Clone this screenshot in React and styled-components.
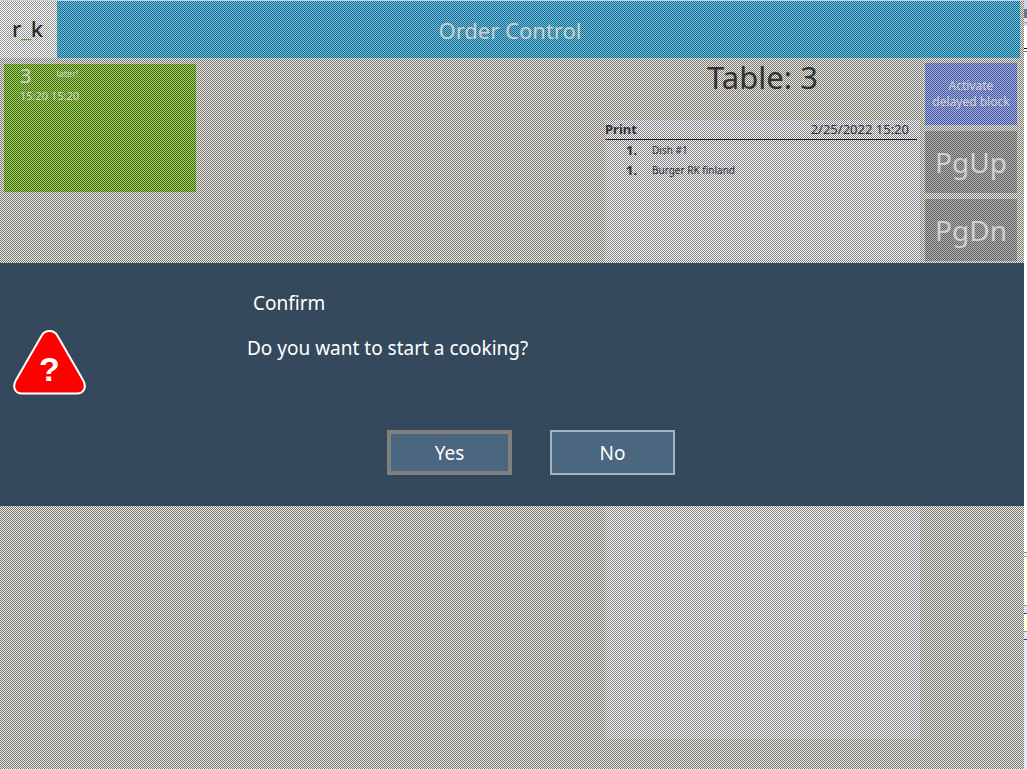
import React from "react";
import styled, { createGlobalStyle, css } from "styled-components";

const hex = (color) => color.replace("#", "%23");

const checkerTile = (light, dark) =>
  `url("data:image/svg+xml,%3Csvg xmlns='http://www.w3.org/2000/svg' width='32' height='32' shape-rendering='crispEdges'%3E%3Cdefs%3E%3Cpattern id='c' width='2' height='2' patternUnits='userSpaceOnUse'%3E%3Crect width='2' height='2' fill='${hex(light)}'/%3E%3Crect width='1' height='1' fill='${hex(dark)}'/%3E%3Crect x='1' y='1' width='1' height='1' fill='${hex(dark)}'/%3E%3C/pattern%3E%3C/defs%3E%3Crect width='32' height='32' fill='url(%23c)'/%3E%3C/svg%3E")`;

const dither = (light, dark) => css`
  background: ${checkerTile(light, dark)} 0 0 / 32px 32px fixed;
`;

const GlobalStyle = createGlobalStyle`
  *, *::before, *::after { box-sizing: border-box; }
  body { margin: 0; font-family: "Noto Sans", "Open Sans", sans-serif; color: #323235; }
  button { font-family: inherit; cursor: pointer; }
  h1, h2, h3, p, ol { margin: 0; padding: 0; font-weight: 400; }
`;

const Desktop = styled.div`
  display: flex;
  min-height: 100vh;
  background: #e8e8e8;
`;

const Stage = styled.div`
  position: relative;
  flex: 1;
  display: flex;
  flex-direction: column;
  border-top: 1px solid #c3d1e0;
  border-bottom: 1px solid #dcdcda;
  ${dither("#eae9e3", "#7a7872")}
`;

const Header = styled.header`
  display: flex;
  height: 57px;
  margin-right: 4px;
`;

const Logo = styled.div`
  width: 57px;
  display: flex;
  align-items: center;
  justify-content: center;
  padding: 0 2px 4px 0;
  font-size: 22px;
  line-height: 28px;
  font-weight: 500;
  color: #2b2b2b;
  ${dither("#ffffff", "#929292")}
`;

const Underscore = styled.span`
  color: #5f9a45;
`;

const Title = styled.h1`
  flex: 1;
  display: flex;
  align-items: center;
  justify-content: center;
  padding-right: 57px;
  font-size: 22px;
  line-height: 32px;
  color: #d0cccc;
  ${dither("#6cc0e0", "#1d6a8c")}
`;

const Body = styled.main`
  flex: 1;
  display: flex;
  padding-right: 7px;
`;

const Orders = styled.section`
  flex: 1;
  padding: 6px 4px;
`;

const OrderCard = styled.article`
  width: 192px;
  height: 128px;
  padding: 0 16px;
  color: #cfd3c6;
  ${dither("#a2cf62", "#436c14")}
`;

const CardTop = styled.div`
  display: flex;
  gap: 25px;
  line-height: 24px;
`;

const CardNumber = styled.h2`
  font-size: 20px;
`;

const CardNote = styled.span`
  font-size: 9px;
  line-height: 20px;
`;

const CardTimes = styled.p`
  font-size: 11px;
  line-height: 16px;
`;

const Detail = styled.section`
  width: 315px;
  display: flex;
  flex-direction: column;
  margin-bottom: 30px;
`;

const TableName = styled.h2`
  height: 62px;
  text-align: center;
  font-size: 31px;
  line-height: 38px;
`;

const Paper = styled.div`
  flex: 1;
  ${dither("#f8f8fa", "#828284")}
`;

const TicketHead = styled.div`
  display: flex;
  justify-content: space-between;
  height: 20px;
  margin-right: 3px;
  padding-right: 8px;
  border-bottom: 1px solid #1e1e1e;
  font-size: 13px;
  line-height: 18px;
`;

const Dishes = styled.ol`
  list-style: none;
`;

const Dish = styled.li`
  display: flex;
  line-height: 20px;
  font-size: 10px;
`;

const Quantity = styled.strong`
  width: 47px;
  padding-left: 21px;
  font-size: 13px;
`;

const Side = styled.nav`
  width: 97px;
  display: flex;
  flex-direction: column;
  gap: 6px;
  padding: 5px 0 0 5px;
`;

const SideButton = styled.button`
  height: 62px;
  padding: 0;
  border: 0;
  color: #cfcfcf;
  font-size: ${(p) => (p.$small ? "12px" : "28px")};
  line-height: ${(p) => (p.$small ? "16px" : "40px")};
  ${(p) => (p.$small ? dither("#a0b0e4", "#46569a") : dither("#b0b0b0", "#646464"))}
`;

const Overlay = styled.div`
  position: absolute;
  inset: 0;
  display: flex;
  align-items: center;
  padding-bottom: 1px;
`;

const Dialog = styled.section`
  width: 100%;
  display: flex;
  padding: 26px 0 31px;
  background: #34495c;
  color: #fff;
  font-size: 19px;
  line-height: 28px;
`;

const IconCell = styled.div`
  width: 247px;
  padding: 39px 12px 0;
`;

const DialogBody = styled.div`
  flex: 1;
`;

const DialogTitle = styled.h2`
  padding-left: 6px;
  font-size: 19px;
`;

const Message = styled.p`
  padding-top: 17px;
`;

const Actions = styled.div`
  display: flex;
  gap: 38px;
  padding: 68px 0 0 140px;
`;

const Choice = styled.button`
  width: 125px;
  height: 45px;
  padding: 0;
  border: ${(p) => (p.$focused ? "4px solid #80807f" : "2px solid #a3b5c3")};
  background: #4b677f;
  color: #fff;
  font-size: 19px;
  line-height: 28px;
`;

const Behind = styled.div`
  width: 3px;
  display: flex;
  flex-direction: column;
`;

const Sliver = styled.div`
  height: ${(p) => p.$height}px;
  flex: ${(p) => (p.$grow ? "1 0 auto" : "none")};
  background: ${(p) => p.$color};
`;

const slivers = [
  [9, "#c5d5ea"], [9, "#6b7686"], [4, "#dce6f4"], [1, "#8c9db8"], [3, "#c8d8ee"],
  [22, "#fff"], [1, "#000"], [2, "#fff"], [1, "#777"], [500, "#fff"],
  [1, "#888c96"], [3, "#eceef4"], [1, "#aaa"], [48, "#ffffe4"], [1, "#999"],
  [7, "#d6e4f6"], [1, "#444"], [17, "#ffffe4"], [1, "#999"], [7, "#d6e4f6"], [1, "#444"],
];

const Warning = () => (
  <svg width="75" height="70" viewBox="0 0 75 70" role="img" aria-label="Question">
    <path
      d="M30 7C33 1.500 42 1.500 45 7L71 52C75 59 72 65.500 65 65.500H10C3 65.500 0 59 4 52Z"
      fill="#f00"
      stroke="#fff"
      strokeWidth="2"
      strokeLinejoin="round"
    />
    <text
      x="37.500"
      y="53"
      textAnchor="middle"
      fill="#fff"
      fontFamily="Liberation Sans, sans-serif"
      fontSize="34"
      fontWeight="700"
    >
      ?
    </text>
  </svg>
);

export default function App() {
  return (
    <Desktop>
      <GlobalStyle />
      <Stage>
        <Header>
          <Logo>r<Underscore>_</Underscore>k</Logo>
          <Title>Order Control</Title>
        </Header>
        <Body>
          <Orders>
            <OrderCard>
              <CardTop>
                <CardNumber>3</CardNumber>
                <CardNote>later!</CardNote>
              </CardTop>
              <CardTimes>15:20 15:20</CardTimes>
            </OrderCard>
          </Orders>
          <Detail>
            <TableName>Table: 3</TableName>
            <Paper>
              <TicketHead>
                <strong>Print</strong>
                <time>2/25/2022 15:20</time>
              </TicketHead>
              <Dishes>
                <Dish><Quantity>1.</Quantity>Dish #1</Dish>
                <Dish><Quantity>1.</Quantity>Burger RK finland</Dish>
              </Dishes>
            </Paper>
          </Detail>
          <Side>
            <SideButton $small>Activate<br />delayed block</SideButton>
            <SideButton>PgUp</SideButton>
            <SideButton>PgDn</SideButton>
          </Side>
        </Body>
        <Overlay>
          <Dialog role="dialog" aria-labelledby="confirm-title">
            <IconCell><Warning /></IconCell>
            <DialogBody>
              <DialogTitle id="confirm-title">Confirm</DialogTitle>
              <Message>Do you want to start a cooking?</Message>
              <Actions>
                <Choice $focused>Yes</Choice>
                <Choice>No</Choice>
              </Actions>
            </DialogBody>
          </Dialog>
        </Overlay>
      </Stage>
      <Behind>
        {slivers.map(([height, color], i) => (
          <Sliver key={i} $height={height} $color={color} />
        ))}
        <Sliver $height={0} $grow $color="#e4e6ee" />
      </Behind>
    </Desktop>
  );
}
